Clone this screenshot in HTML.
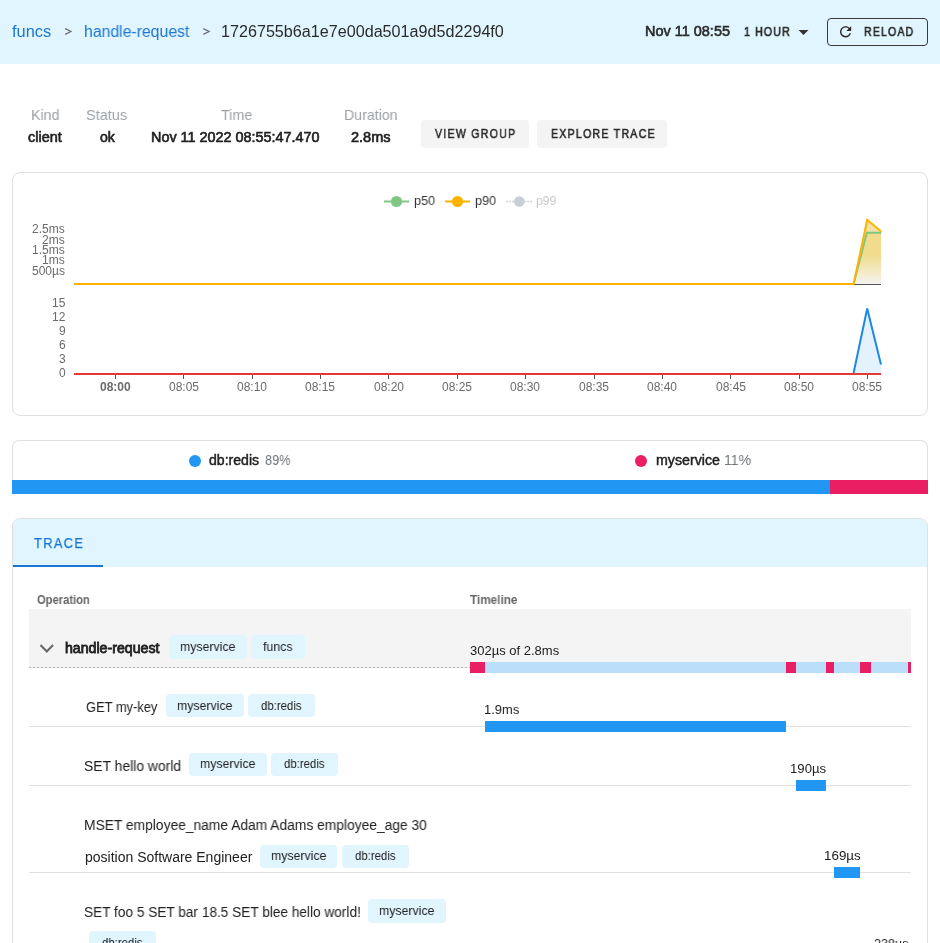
<!DOCTYPE html>
<html><head><meta charset="utf-8">
<style>
html,body{margin:0;padding:0;background:#fff;width:940px;height:943px;overflow:hidden;position:relative;font-family:'Liberation Sans',sans-serif}
.t{position:absolute;white-space:pre;transform-origin:0 0;will-change:transform;font-family:'Liberation Sans',sans-serif}
.b{position:absolute;box-sizing:border-box}
.chip{position:absolute;background:#e1f5fe;border-radius:4px}
</style></head><body>
<!-- header -->
<div class="b" style="left:0;top:0;width:940px;height:64px;background:#e1f5fe"></div>
<div class="b" style="left:827px;top:18px;width:101px;height:28px;border:1.3px solid #3a3a3a;border-radius:4px"></div>
<!-- summary buttons -->
<div class="b" style="left:421px;top:120px;width:108px;height:28px;background:#f4f4f4;border-radius:4px"></div>
<div class="b" style="left:537px;top:120px;width:130px;height:28px;background:#f4f4f4;border-radius:4px"></div>
<!-- chart card -->
<div class="b" style="left:12px;top:172px;width:916px;height:244px;border:1px solid #e0e0e0;border-radius:8px"></div>
<!-- breakdown card -->
<div class="b" style="left:12px;top:440px;width:916px;height:54px;border:1px solid #e0e0e0;border-bottom:none;border-radius:7px 7px 0 0"></div>
<div class="b" style="left:12px;top:480px;width:818px;height:14px;background:#2196f3"></div>
<div class="b" style="left:830px;top:480px;width:98px;height:14px;background:#e91e63"></div>
<div class="b" style="left:189px;top:455px;width:12px;height:12px;border-radius:50%;background:#2196f3"></div>
<div class="b" style="left:635px;top:455px;width:12px;height:12px;border-radius:50%;background:#e91e63"></div>
<!-- trace card -->
<div class="b" style="left:12px;top:518px;width:916px;height:460px;border:1px solid #e0e0e0;border-radius:8px"></div>
<div class="b" style="left:13px;top:519px;width:914px;height:48px;background:#e1f5fe;border-radius:7px 7px 0 0"></div>
<div class="b" style="left:13px;top:565px;width:90px;height:2px;background:#1976d2"></div>
<!-- row1 -->
<div class="b" style="left:29px;top:609px;width:882px;height:58px;background:#f4f4f4"></div>
<div class="b" style="left:29px;top:667px;width:441px;height:1px;background:repeating-linear-gradient(90deg,#b8b8b8 0 2px,#e4e4e4 2px 4px)"></div>
<div class="b" style="left:29px;top:726px;width:882px;height:1px;background:#e0e0e0"></div>
<div class="b" style="left:29px;top:785px;width:882px;height:1px;background:#e0e0e0"></div>
<div class="b" style="left:29px;top:872px;width:882px;height:1px;background:#e0e0e0"></div>
<svg width="940" height="943" style="position:absolute;left:0;top:0">
  <defs>
    <linearGradient id="yf" x1="0" y1="0" x2="0" y2="1">
      <stop offset="0" stop-color="#f1db8a"/>
      <stop offset="0.55" stop-color="#f1dc8e"/>
      <stop offset="0.85" stop-color="#f5ecd0"/>
      <stop offset="1" stop-color="#f3f3f3"/>
    </linearGradient>
  </defs>
  <!-- breadcrumb separators -->
  <polyline points="65.1,28.6 70.9,31.5 65.1,34.4" fill="none" stroke="#6f6f6f" stroke-width="1.3"/>
  <polyline points="203.3,28.6 209.1,31.5 203.3,34.4" fill="none" stroke="#6f6f6f" stroke-width="1.3"/>
  <!-- header caret -->
  <path d="M798.5 30 L808.5 30 L803.5 35 Z" fill="#333"/>
  <!-- reload icon -->
  <path transform="translate(837.2,23.4) scale(0.7)" d="M17.65 6.35C16.2 4.9 14.21 4 12 4c-4.42 0-7.99 3.58-7.99 8s3.57 8 7.99 8c3.73 0 6.84-2.55 7.73-6h-2.08c-.82 2.33-3.04 4-5.65 4-3.31 0-6-2.690-6-6s2.69-6 6-6c1.66 0 3.14.69 4.22 1.780L13 11h7V4l-2.35 2.35z" fill="#2b2b2b"/>
  <!-- legend -->
  <line x1="384" y1="201.5" x2="409" y2="201.5" stroke="#81c784" stroke-width="2"/>
  <circle cx="396.5" cy="201.5" r="5.6" fill="#81c784"/>
  <line x1="445" y1="201.5" x2="470" y2="201.5" stroke="#ffb300" stroke-width="2"/>
  <circle cx="457.5" cy="201.5" r="5.6" fill="#ffb300"/>
  <line x1="506" y1="201.5" x2="532" y2="201.5" stroke="#cfd4d8" stroke-width="1.6" stroke-dasharray="2 1"/>
  <circle cx="519.3" cy="201.5" r="5.3" fill="#c8ced3"/>
  <!-- latency chart -->
  <polygon points="853.6,284 867.2,219.8 881.2,231.6 881.2,284" fill="url(#yf)"/>
  <polygon points="866.9,232.7 867.2,219.8 881.2,231.6 881.2,232.7" fill="#f3e2a6"/>
  <line x1="854" y1="284.5" x2="881" y2="284.5" stroke="#555" stroke-width="1"/>
  <polyline points="853.6,284 866.9,232.7 881.2,232.7" fill="none" stroke="#81c784" stroke-width="2"/>
  <polyline points="74,284 853.6,284 867.2,219.8 881.2,231.6" fill="none" stroke="#ffb300" stroke-width="2" stroke-linejoin="miter"/>
  <!-- count chart -->
  <polygon points="853.6,374 867.2,308.5 881,364.5 881,374" fill="#e3f2fd"/>
  <polyline points="853.6,373 867.2,308.5 881,364.5" fill="none" stroke="#1e88e5" stroke-width="2"/>
  <line x1="74" y1="374" x2="881" y2="374" stroke="#e53935" stroke-width="2"/>
  <g stroke="#555" stroke-width="1">
    <line x1="115.5" y1="375" x2="115.5" y2="379"/><line x1="183.5" y1="375" x2="183.5" y2="379"/>
    <line x1="252.5" y1="375" x2="252.5" y2="379"/><line x1="320.5" y1="375" x2="320.5" y2="379"/>
    <line x1="388.5" y1="375" x2="388.5" y2="379"/><line x1="457.5" y1="375" x2="457.5" y2="379"/>
    <line x1="525.5" y1="375" x2="525.5" y2="379"/><line x1="594.5" y1="375" x2="594.5" y2="379"/>
    <line x1="662.5" y1="375" x2="662.5" y2="379"/><line x1="730.5" y1="375" x2="730.5" y2="379"/>
    <line x1="799.5" y1="375" x2="799.5" y2="379"/><line x1="867.5" y1="375" x2="867.5" y2="379"/>
  </g>
  <!-- chevron -->
  <polyline points="40.5,645 46.8,651.5 53.1,645" fill="none" stroke="#6a6a6a" stroke-width="2.2"/>
  <!-- timeline bars -->
  <rect x="470" y="662" width="441" height="11" fill="#bbdefb"/>
  <rect x="470" y="662" width="15" height="11" fill="#e91e63"/>
  <rect x="786" y="662" width="10" height="11" fill="#e91e63"/>
  <rect x="826" y="662" width="8" height="11" fill="#e91e63"/>
  <rect x="860" y="662" width="11" height="11" fill="#e91e63"/>
  <rect x="908" y="662" width="3" height="11" fill="#e91e63"/>
  <rect x="485" y="721" width="301" height="11" fill="#2196f3"/>
  <rect x="796" y="780" width="30" height="11" fill="#2196f3"/>
  <rect x="834" y="867" width="26" height="11" fill="#2196f3"/>
</svg>
<div class="t" style="left:12.40px;top:23.70px;font-size:16px;line-height:16px;font-weight:400;color:#1976d2;letter-spacing:0px;transform:scaleX(1.0237);">funcs</div>
<div class="t" style="left:83.81px;top:23.70px;font-size:16px;line-height:16px;font-weight:400;color:#1976d2;letter-spacing:0px;transform:scaleX(0.9868);">handle-request</div>
<div class="t" style="left:221.49px;top:23.70px;font-size:16px;line-height:16px;font-weight:400;color:#2b2b2b;letter-spacing:0px;transform:scaleX(1.0090);">1726755b6a1e7e00da501a9d5d2294f0</div>
<div class="t" style="left:644.67px;top:23.50px;font-size:14px;line-height:14px;font-weight:400;color:#2b2b2b;letter-spacing:0px;transform:scaleX(1.0333);-webkit-text-stroke:0.6px #2b2b2b;">Nov 11 08:55</div>
<div class="t" style="left:744.00px;top:25.50px;font-size:12.5px;line-height:12.5px;font-weight:400;color:#2b2b2b;letter-spacing:1.3px;transform:scaleX(0.8519);-webkit-text-stroke:0.7px #2b2b2b;">1 HOUR</div>
<div class="t" style="left:864.00px;top:25.00px;font-size:13px;line-height:13px;font-weight:400;color:#2b2b2b;letter-spacing:1.5px;transform:scaleX(0.8066);-webkit-text-stroke:0.7px #2b2b2b;">RELOAD</div>
<div class="t" style="left:31.15px;top:106.80px;font-size:15px;line-height:15px;font-weight:400;color:#9ca2a7;letter-spacing:0px;transform:scaleX(0.9464);">Kind</div>
<div class="t" style="left:86.43px;top:106.80px;font-size:15px;line-height:15px;font-weight:400;color:#9ca2a7;letter-spacing:0px;transform:scaleX(0.9659);">Status</div>
<div class="t" style="left:221.00px;top:106.90px;font-size:15px;line-height:15px;font-weight:400;color:#9ca2a7;letter-spacing:0px;transform:scaleX(0.9531);">Time</div>
<div class="t" style="left:343.65px;top:106.90px;font-size:15px;line-height:15px;font-weight:400;color:#9ca2a7;letter-spacing:0px;transform:scaleX(0.9455);">Duration</div>
<div class="t" style="left:28.30px;top:129.90px;font-size:14px;line-height:14px;font-weight:400;color:#212121;letter-spacing:0px;transform:scaleX(1.0364);-webkit-text-stroke:0.6px #212121;">client</div>
<div class="t" style="left:99.80px;top:129.90px;font-size:14px;line-height:14px;font-weight:400;color:#212121;letter-spacing:0px;transform:scaleX(1.0067);-webkit-text-stroke:0.6px #212121;">ok</div>
<div class="t" style="left:150.97px;top:129.70px;font-size:14px;line-height:14px;font-weight:400;color:#212121;letter-spacing:0px;transform:scaleX(1.0282);-webkit-text-stroke:0.6px #212121;">Nov 11 2022 08:55:47.470</div>
<div class="t" style="left:350.60px;top:129.70px;font-size:14px;line-height:14px;font-weight:400;color:#212121;letter-spacing:0px;transform:scaleX(1.0368);-webkit-text-stroke:0.6px #212121;">2.8ms</div>
<div class="t" style="left:435.30px;top:127.20px;font-size:13px;line-height:13px;font-weight:400;color:#2b2b2b;letter-spacing:1.6px;transform:scaleX(0.8101);-webkit-text-stroke:0.6px #2b2b2b;">VIEW GROUP</div>
<div class="t" style="left:550.80px;top:127.20px;font-size:13px;line-height:13px;font-weight:400;color:#2b2b2b;letter-spacing:1.6px;transform:scaleX(0.8086);-webkit-text-stroke:0.6px #2b2b2b;">EXPLORE TRACE</div>
<div class="t" style="left:414.23px;top:194.20px;font-size:13px;line-height:13px;font-weight:400;color:#333;letter-spacing:0px;transform:scaleX(0.9700);">p50</div>
<div class="t" style="left:475.23px;top:194.20px;font-size:13px;line-height:13px;font-weight:400;color:#333;letter-spacing:0px;transform:scaleX(0.9700);">p90</div>
<div class="t" style="left:536.47px;top:194.20px;font-size:13px;line-height:13px;font-weight:400;color:#c8c8c8;letter-spacing:0px;transform:scaleX(0.9300);">p99</div>
<div class="t" style="left:32.30px;top:222.80px;font-size:12px;line-height:12px;font-weight:400;color:#6b6b6b;letter-spacing:0px;">2.5ms</div>
<div class="t" style="left:42.30px;top:233.60px;font-size:12px;line-height:12px;font-weight:400;color:#6b6b6b;letter-spacing:0px;">2ms</div>
<div class="t" style="left:32.30px;top:244.40px;font-size:12px;line-height:12px;font-weight:400;color:#6b6b6b;letter-spacing:0px;">1.5ms</div>
<div class="t" style="left:42.30px;top:254.30px;font-size:12px;line-height:12px;font-weight:400;color:#6b6b6b;letter-spacing:0px;">1ms</div>
<div class="t" style="left:32.30px;top:265.20px;font-size:12px;line-height:12px;font-weight:400;color:#6b6b6b;letter-spacing:0px;">500µs</div>
<div class="t" style="left:52.40px;top:296.70px;font-size:12px;line-height:12px;font-weight:400;color:#6b6b6b;letter-spacing:0px;">15</div>
<div class="t" style="left:52.40px;top:310.80px;font-size:12px;line-height:12px;font-weight:400;color:#6b6b6b;letter-spacing:0px;">12</div>
<div class="t" style="left:59.40px;top:324.70px;font-size:12px;line-height:12px;font-weight:400;color:#6b6b6b;letter-spacing:0px;">9</div>
<div class="t" style="left:59.40px;top:338.50px;font-size:12px;line-height:12px;font-weight:400;color:#6b6b6b;letter-spacing:0px;">6</div>
<div class="t" style="left:59.40px;top:352.70px;font-size:12px;line-height:12px;font-weight:400;color:#6b6b6b;letter-spacing:0px;">3</div>
<div class="t" style="left:59.40px;top:366.80px;font-size:12px;line-height:12px;font-weight:400;color:#6b6b6b;letter-spacing:0px;">0</div>
<div class="t" style="left:100.20px;top:380.70px;font-size:12px;line-height:12px;font-weight:700;color:#6b6b6b;letter-spacing:0px;">08:00</div>
<div class="t" style="left:168.57px;top:380.70px;font-size:12px;line-height:12px;font-weight:400;color:#6b6b6b;letter-spacing:0px;">08:05</div>
<div class="t" style="left:236.94px;top:380.70px;font-size:12px;line-height:12px;font-weight:400;color:#6b6b6b;letter-spacing:0px;">08:10</div>
<div class="t" style="left:305.31px;top:380.70px;font-size:12px;line-height:12px;font-weight:400;color:#6b6b6b;letter-spacing:0px;">08:15</div>
<div class="t" style="left:373.68px;top:380.70px;font-size:12px;line-height:12px;font-weight:400;color:#6b6b6b;letter-spacing:0px;">08:20</div>
<div class="t" style="left:442.05px;top:380.70px;font-size:12px;line-height:12px;font-weight:400;color:#6b6b6b;letter-spacing:0px;">08:25</div>
<div class="t" style="left:510.42px;top:380.70px;font-size:12px;line-height:12px;font-weight:400;color:#6b6b6b;letter-spacing:0px;">08:30</div>
<div class="t" style="left:578.79px;top:380.70px;font-size:12px;line-height:12px;font-weight:400;color:#6b6b6b;letter-spacing:0px;">08:35</div>
<div class="t" style="left:647.16px;top:380.70px;font-size:12px;line-height:12px;font-weight:400;color:#6b6b6b;letter-spacing:0px;">08:40</div>
<div class="t" style="left:715.53px;top:380.70px;font-size:12px;line-height:12px;font-weight:400;color:#6b6b6b;letter-spacing:0px;">08:45</div>
<div class="t" style="left:783.90px;top:380.70px;font-size:12px;line-height:12px;font-weight:400;color:#6b6b6b;letter-spacing:0px;">08:50</div>
<div class="t" style="left:852.27px;top:380.70px;font-size:12px;line-height:12px;font-weight:400;color:#6b6b6b;letter-spacing:0px;">08:55</div>
<div class="t" style="left:209.40px;top:453.00px;font-size:14px;line-height:14px;font-weight:400;color:#212121;letter-spacing:0px;transform:scaleX(1.0060);-webkit-text-stroke:0.45px #212121;">db:redis</div>
<div class="t" style="left:264.80px;top:453.00px;font-size:14.7px;line-height:14.7px;font-weight:400;color:#707478;letter-spacing:0px;transform:scaleX(0.8690);">89%</div>
<div class="t" style="left:655.70px;top:453.00px;font-size:14px;line-height:14px;font-weight:400;color:#212121;letter-spacing:0px;transform:scaleX(1.0159);-webkit-text-stroke:0.45px #212121;">myservice</div>
<div class="t" style="left:723.54px;top:453.00px;font-size:14.7px;line-height:14.7px;font-weight:400;color:#707478;letter-spacing:0px;transform:scaleX(0.9556);">11%</div>
<div class="t" style="left:33.60px;top:535.30px;font-size:15.5px;line-height:15.5px;font-weight:400;color:#1976d2;letter-spacing:1.5px;transform:scaleX(0.8345);-webkit-text-stroke:0.25px #1976d2;">TRACE</div>
<div class="t" style="left:37.20px;top:593.50px;font-size:12px;line-height:12px;font-weight:700;color:#666;letter-spacing:0px;transform:scaleX(0.9321);">Operation</div>
<div class="t" style="left:470.20px;top:593.50px;font-size:12px;line-height:12px;font-weight:700;color:#666;letter-spacing:0px;transform:scaleX(0.9792);">Timeline</div>
<div class="t" style="left:65.30px;top:641.30px;font-size:14px;line-height:14px;font-weight:400;color:#212121;letter-spacing:0px;transform:scaleX(1.0106);-webkit-text-stroke:0.8px #212121;">handle-request</div>
<div class="t" style="left:470.20px;top:643.60px;font-size:13px;line-height:13px;font-weight:400;color:#212121;letter-spacing:0px;">302µs of 2.8ms</div>
<div class="t" style="left:85.60px;top:699.80px;font-size:14px;line-height:14px;font-weight:400;color:#212121;letter-spacing:0px;transform:scaleX(0.9205);">GET my-key</div>
<div class="t" style="left:484.41px;top:702.90px;font-size:13px;line-height:13px;font-weight:400;color:#212121;letter-spacing:0px;transform:scaleX(0.9941);">1.9ms</div>
<div class="t" style="left:83.71px;top:758.80px;font-size:14px;line-height:14px;font-weight:400;color:#212121;letter-spacing:0px;transform:scaleX(0.9927);">SET hello world</div>
<div class="t" style="left:789.79px;top:762.00px;font-size:13px;line-height:13px;font-weight:400;color:#212121;letter-spacing:0px;transform:scaleX(1.0118);">190µs</div>
<div class="t" style="left:84.31px;top:818.40px;font-size:14px;line-height:14px;font-weight:400;color:#212121;letter-spacing:0px;transform:scaleX(0.9864);">MSET employee_name Adam Adams employee_age 30</div>
<div class="t" style="left:84.80px;top:850.30px;font-size:14px;line-height:14px;font-weight:400;color:#212121;letter-spacing:0px;">position Software Engineer</div>
<div class="t" style="left:823.97px;top:849.00px;font-size:13px;line-height:13px;font-weight:400;color:#212121;letter-spacing:0px;transform:scaleX(1.0294);">169µs</div>
<div class="t" style="left:83.63px;top:904.60px;font-size:14px;line-height:14px;font-weight:400;color:#212121;letter-spacing:0px;transform:scaleX(0.9745);">SET foo 5 SET bar 18.5 SET blee hello world!</div>
<div class="t" style="left:873.80px;top:936.50px;font-size:13px;line-height:13px;font-weight:400;color:#212121;letter-spacing:0px;transform:scaleX(0.9657);">238µs</div>
<div class="chip" style="left:169px;top:635px;width:78.0px;height:23.6px"></div>
<div class="t" style="left:180.19px;top:639.90px;font-size:13.5px;line-height:13.5px;color:#212121;transform:scaleX(0.9119)">myservice</div>
<div class="chip" style="left:251.4px;top:635px;width:53.3px;height:23.6px"></div>
<div class="t" style="left:263.40px;top:639.90px;font-size:13.5px;line-height:13.5px;color:#212121;transform:scaleX(0.9156)">funcs</div>
<div class="chip" style="left:166px;top:694.3px;width:77.6px;height:23.2px"></div>
<div class="t" style="left:176.99px;top:699.20px;font-size:13.5px;line-height:13.5px;color:#212121;transform:scaleX(0.9119)">myservice</div>
<div class="chip" style="left:248px;top:694.3px;width:66.8px;height:23.2px"></div>
<div class="t" style="left:261.15px;top:699.20px;font-size:13.5px;line-height:13.5px;color:#212121;transform:scaleX(0.8438)">db:redis</div>
<div class="chip" style="left:189px;top:752.5px;width:77.5px;height:23.8px"></div>
<div class="t" style="left:199.94px;top:757.40px;font-size:13.5px;line-height:13.5px;color:#212121;transform:scaleX(0.9119)">myservice</div>
<div class="chip" style="left:271px;top:752.5px;width:66.6px;height:23.8px"></div>
<div class="t" style="left:284.05px;top:757.40px;font-size:13.5px;line-height:13.5px;color:#212121;transform:scaleX(0.8438)">db:redis</div>
<div class="chip" style="left:260.2px;top:844.5px;width:77.2px;height:23.5px"></div>
<div class="t" style="left:270.99px;top:849.40px;font-size:13.5px;line-height:13.5px;color:#212121;transform:scaleX(0.9119)">myservice</div>
<div class="chip" style="left:342px;top:844.5px;width:66.6px;height:23.5px"></div>
<div class="t" style="left:355.05px;top:849.40px;font-size:13.5px;line-height:13.5px;color:#212121;transform:scaleX(0.8438)">db:redis</div>
<div class="chip" style="left:367.8px;top:899px;width:78.2px;height:23.7px"></div>
<div class="t" style="left:379.09px;top:903.90px;font-size:13.5px;line-height:13.5px;color:#212121;transform:scaleX(0.9119)">myservice</div>
<div class="chip" style="left:89px;top:931px;width:67.0px;height:23.7px"></div>
<div class="t" style="left:102.25px;top:935.90px;font-size:13.5px;line-height:13.5px;color:#212121;transform:scaleX(0.8438)">db:redis</div>
</body></html>
